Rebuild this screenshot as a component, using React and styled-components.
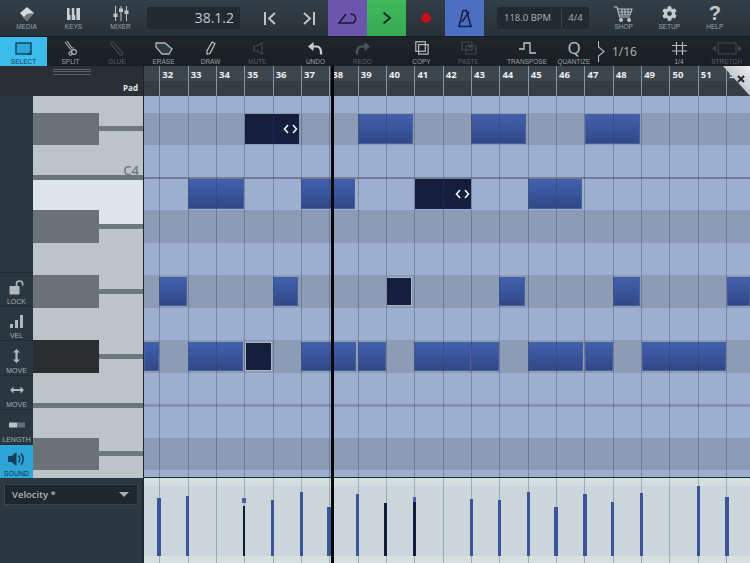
import React from 'react';
import styled, { createGlobalStyle } from 'styled-components';
import { FaCog } from 'react-icons/fa';

const GlobalStyle = createGlobalStyle`
  html, body {
    margin: 0;
    padding: 0;
    background: #2c3841;
    overflow: hidden;
  }
  * {
    box-sizing: border-box;
  }
`;

const BAR_START = 15.3;
const BAR_WIDTH = 28.35;

const bars = Array.from({ length: 21 }, (_, i) => 32 + i);

const rows = [
  { h: 16.5, key: 'white' },
  { h: 32.5, key: 'black', dark: true, notes: [[244.5, 299, 'sel', true], [358, 413], [471, 526], [585, 640]] },
  { h: 32.5, key: 'white', label: 'C4', line: '#6f7d98' },
  { h: 32.5, key: 'lit', notes: [[187.7, 244], [301.3, 355], [415, 471, 'sel', true], [528.3, 582]] },
  { h: 32.5, key: 'black', dark: true, lit: true },
  { h: 32.5, key: 'white' },
  { h: 32.5, key: 'black', dark: true, notes: [[159, 186.5], [272.7, 298.5], [386.3, 412.5, 'box'], [499.3, 525.5], [612.7, 640], [727, 750]] },
  { h: 32.5, key: 'white' },
  { h: 32.5, key: 'ebony', dark: true, notes: [[144, 158.5], [187.7, 243], [244.7, 272, 'box'], [301.3, 356.5], [358, 386], [414.3, 470.7], [471.3, 499], [528, 583.3], [584.7, 613], [641.7, 726.3]] },
  { h: 32.5, key: 'white', line: '#8392ae' },
  { h: 32.5, key: 'white' },
  { h: 32.5, key: 'black', dark: true },
  { h: 8, key: 'white' },
];

const velocities = [
  [159, 497.7], [187.7, 496.3], [244, 506, 'sel', 498], [272.7, 500], [301.7, 491.7], [329, 507],
  [357.7, 494], [385.7, 502.7, 'sel'], [414.7, 501, 'sel', 497], [471.3, 499], [499.3, 500],
  [528.3, 491.7], [556, 507], [585, 494], [612.7, 502], [641.7, 493], [698.3, 486], [727, 496.7],
];

const Screen = styled.div`
  position: relative;
  width: 750px;
  height: 563px;
  overflow: hidden;
  font-family: 'Liberation Sans', Arial, sans-serif;
`;

const TopBar = styled.div`
  display: flex;
  align-items: center;
  height: 37px;
  padding-left: 3px;
  background: linear-gradient(#333f48, #27313a);
  border-bottom: 1px solid #15191d;
`;

const NavItem = styled.div`
  display: flex;
  flex-direction: column;
  align-items: center;
  align-self: flex-start;
  flex: none;
  width: ${(p) => p.$w || 47}px;
  padding-top: 5px;
  color: #c4cbcf;
`;

const NavIcon = styled.div`
  display: flex;
  align-items: center;
  justify-content: center;
  height: 17px;
`;

const TinyLabel = styled.span`
  font-size: 6.5px;
  line-height: 9px;
  color: ${(p) => (p.$active ? '#0e3d5a' : p.$dim ? '#566067' : '#9aa3a9')};
  white-space: nowrap;
`;

const HelpMark = styled.span`
  font-size: 20px;
  font-weight: 700;
  line-height: 17px;
  color: #c4cbcf;
`;

const Position = styled.div`
  flex: none;
  width: 93px;
  height: 22px;
  margin-left: 3px;
  padding-right: 6px;
  border-radius: 2px;
  background: #212a31;
  color: #c2c7cb;
  font: 500 14px/22px 'Open Sans', sans-serif;
  text-align: right;
`;

const Skip = styled.div`
  display: flex;
  align-items: center;
  justify-content: center;
  flex: none;
  width: 39px;
  height: 36px;
  margin-left: ${(p) => p.$ml || 0}px;
`;

const Transport = styled.div`
  display: flex;
  align-items: center;
  justify-content: center;
  flex: none;
  width: 39px;
  height: 36px;
  background: ${(p) => p.$bg || 'transparent'};
`;

const RecordDot = styled.div`
  width: 10px;
  height: 10px;
  border-radius: 50%;
  background: #c3101c;
`;

const Tempo = styled.div`
  display: flex;
  align-items: center;
  flex: none;
  width: 92px;
  height: 22px;
  margin: 0 12px 0 13px;
  border-radius: 2px;
  background: #212a31;
  color: #a9b1b6;
  font: 500 9.5px/22px 'Open Sans', sans-serif;
`;

const TempoBpm = styled.div`
  width: 65px;
  padding-left: 7px;
  border-right: 1px solid #3a464e;
  line-height: 18px;
`;

const TempoSig = styled.div`
  flex: 1;
  text-align: center;
`;

const ToolBar = styled.div`
  display: flex;
  height: 29px;
  background: linear-gradient(#20262b, #191e23);
`;

const Tool = styled.div`
  display: flex;
  flex-direction: column;
  align-items: center;
  justify-content: flex-end;
  flex: none;
  width: ${(p) => p.$w || 47}px;
  margin-left: ${(p) => p.$ml || 0}px;
  background: ${(p) => (p.$active ? '#3cbcec' : 'transparent')};
`;

const ToolIcon = styled.div`
  display: flex;
  align-items: center;
  justify-content: center;
  height: 18px;
`;

const QuantizeQ = styled.span`
  font: 400 17px/18px 'Open Sans', sans-serif;
  color: #b9c1c6;
`;

const Fraction = styled.div`
  display: flex;
  align-items: center;
  flex: none;
  width: 58px;
  padding-left: 1px;
  color: #aeb6bb;
  font: 500 12px/28px 'Open Sans', sans-serif;
  gap: 7px;
`;

const RulerBar = styled.div`
  position: relative;
  display: flex;
  height: 30px;
`;

const TrackName = styled.div`
  position: relative;
  display: flex;
  align-items: flex-end;
  justify-content: flex-end;
  flex: none;
  width: 144px;
  padding: 0 5px 2px 0;
  background: #2a2f34;
  border-right: 1px solid #1d2125;
  color: #e6e9eb;
  font: 700 8px/12px 'Open Sans', sans-serif;
`;

const Grip = styled.div`
  position: absolute;
  top: 3px;
  left: 53px;
  width: 38px;
  height: 7px;
  background: repeating-linear-gradient(#59626a 0 1px, transparent 1px 2.5px);
`;

const Ruler = styled.div`
  display: flex;
  flex: 1;
  overflow: hidden;
  padding-left: ${BAR_START}px;
  background: linear-gradient(#3d454d 0 50%, #343c44 50%);
`;

const RulerCell = styled.div`
  flex: none;
  width: ${BAR_WIDTH}px;
  padding: 1px 0 0 2px;
  border-left: 1px solid #8c949b;
  color: #eceff1;
  font: 700 9.5px/15px 'Open Sans', sans-serif;
`;

const CloseCorner = styled.div`
  position: absolute;
  top: 0;
  right: 0;
  width: 27px;
  height: 30px;
  padding: 3px 5px 0 0;
  text-align: right;
  background: linear-gradient(45deg, #9ea4a8, #eef0f1);
  clip-path: polygon(0 0, 100% 0, 100% 100%);
`;

const Main = styled.div`
  display: grid;
  grid-template-columns: 144px 606px;
  grid-template-rows: 382px 85px;
`;

const KeyColumn = styled.div`
  display: flex;
  background: #2a3740;
`;

const SideTools = styled.div`
  display: flex;
  flex-direction: column;
  justify-content: flex-end;
  flex: none;
  width: 33px;
`;

const SideTool = styled.div`
  display: flex;
  flex-direction: column;
  align-items: center;
  justify-content: flex-end;
  height: 34.4px;
  border-top: 1px solid #222c34;
  background: ${(p) => (p.$active ? '#2ea5d6' : 'transparent')};
`;

const SideIcon = styled.div`
  display: flex;
  align-items: center;
  justify-content: center;
  height: 20px;
`;

const SideLabel = styled.span`
  font-size: 7px;
  line-height: 9px;
  color: ${(p) => (p.$active ? '#0c3653' : '#a0adb4')};
`;

const Keys = styled.div`
  flex: 1;
  border-right: 1px solid #20282e;
`;

const KeyRow = styled.div`
  position: relative;
  display: flex;
  height: ${(p) => p.$h}px;
  background: ${(p) => (p.$kind === 'lit' ? '#dde4ec' : '#bdc4c7')};
  ${(p) => p.$line && `
    &::after {
      content: '';
      position: absolute;
      left: 0;
      right: 0;
      bottom: -2.5px;
      height: 5px;
      background: #6c767a;
      z-index: 1;
    }
  `}
`;

const BlackKey = styled.div`
  flex: none;
  width: 66px;
  background: ${(p) => (p.$kind === 'ebony' ? '#2b2e30' : '#6a7276')};
`;

const KeyTail = styled.div`
  position: relative;
  flex: 1;
  background: ${(p) => (p.$lit ? 'linear-gradient(#dde4ec 0 50%, #bdc4c7 50%)' : 'transparent')};
  &::before {
    content: '';
    position: absolute;
    left: 0;
    right: 0;
    top: calc(50% - 2.5px);
    height: 5px;
    background: #6e777b;
  }
`;

const KeyName = styled.span`
  position: absolute;
  right: 4px;
  bottom: 1px;
  color: #72797d;
  font: 600 13px/14px 'Open Sans', sans-serif;
`;

const Roll = styled.div`
  position: relative;
  border-bottom: 1px solid #1d2a3b;
  overflow: hidden;
`;

const GridRow = styled.div`
  position: relative;
  height: ${(p) => p.$h}px;
  background: ${(p) => (p.$dark ? '#8c9bb6' : '#9dafd1')};
  ${(p) => p.$line && `
    &::after {
      content: '';
      position: absolute;
      left: 0;
      right: 0;
      bottom: -1.5px;
      height: 2.5px;
      background: ${p.$line};
      z-index: 1;
    }
  `}
`;

const noteBorder = {
  box: '1px solid rgba(222, 229, 236, 0.75)',
  sel: '0',
  plain: '1px solid #4a5f9c',
};

const Note = styled.div`
  position: absolute;
  top: 1.5px;
  height: 29.5px;
  display: flex;
  align-items: center;
  justify-content: flex-end;
  padding-right: 1px;
  background: ${(p) =>
    p.$type ? 'linear-gradient(#141c39, #162042)' : 'linear-gradient(#4160ad, #314887)'};
  border: ${(p) => noteBorder[p.$type || 'plain']};
`;

const BarLines = styled.div`
  position: absolute;
  inset: 0;
  display: flex;
  padding-left: ${BAR_START}px;
  pointer-events: none;
  z-index: 2;
`;

const BarLine = styled.div`
  flex: none;
  width: ${BAR_WIDTH}px;
  border-left: 1px solid ${(p) => p.$color};
`;

const Playhead = styled.div`
  position: absolute;
  top: 66px;
  bottom: 0;
  left: 331px;
  width: 3px;
  background: #050608;
  z-index: 4;
`;

const Controller = styled.div`
  padding: 6px 4px 0 4px;
  background: #2c3942;
  border-right: 2px solid #20292f;
`;

const Select = styled.div`
  display: flex;
  align-items: center;
  justify-content: space-between;
  height: 21px;
  padding: 0 8px 0 7px;
  background: #1e272e;
  border: 1px solid #37444c;
  color: #aeb8bd;
  font: 600 9.5px/19px 'Open Sans', sans-serif;
`;

const SelectArrow = styled.div`
  width: 0;
  height: 0;
  border-left: 5px solid transparent;
  border-right: 5px solid transparent;
  border-top: 5px solid #a6afb4;
`;

const VelocityLane = styled.div`
  position: relative;
  overflow: hidden;
  background: linear-gradient(#d6dfe0 0 8px, #cad6dc 8px 78px, #d6dfe0 78px);
`;

const VelocityBar = styled.div`
  position: absolute;
  bottom: 7.5px;
  width: ${(p) => (p.$sel ? 2.5 : 3.5)}px;
  background: ${(p) => (p.$sel ? '#121b38' : '#3d5596')};
  z-index: 3;
`;

const VelocityCap = styled.div`
  position: absolute;
  width: 3.5px;
  background: #4a62a2;
  z-index: 3;
`;

const Dimmed = ({ children, w = 18, h = 16, stroke = '#3f4950', box = '0 0 18 16' }) => (
  <svg width={w} height={h} viewBox={box} fill="none" stroke={stroke} strokeWidth="1.2">
    {children}
  </svg>
);

const Handles = () => (
  <svg width="15" height="10" viewBox="0 0 15 10" fill="none" stroke="#f2f4f8" strokeWidth="1.6">
    <path d="M5 1 1.5 5 5 9M10 1l3.5 4L10 9" />
  </svg>
);

function App() {
  return (
    <Screen>
      <GlobalStyle />
      <TopBar>
        <NavItem>
          <NavIcon>
            <svg width="16" height="16" viewBox="0 0 16 16">
              <path d="M8 1 15 7 8 15 1 7Z" fill="#d3d9dc" />
              <path d="M8 15 15 7 8 8 4 12Z" fill="#69747b" />
            </svg>
          </NavIcon>
          <TinyLabel>MEDIA</TinyLabel>
        </NavItem>
        <NavItem>
          <NavIcon>
            <svg width="13" height="14" viewBox="0 0 13 14">
              <path d="M0 1h3.6v12H0zM4.7 1h3.6v12H4.7zM9.4 1H13v12H9.4z" fill="#c9cfd3" />
              <path d="M2.6 1h1.6v7H2.6zM7.3 1h1.6v7H7.3z" fill="#2a343c" />
            </svg>
          </NavIcon>
          <TinyLabel>KEYS</TinyLabel>
        </NavItem>
        <NavItem>
          <NavIcon>
            <svg width="16" height="15" viewBox="0 0 16 15" stroke="#bcc4c9" strokeWidth="1" fill="#bcc4c9">
              <path d="M2.5 0v15M8 0v15M13.5 0v15" />
              <rect x="1" y="8" width="3" height="2.5" />
              <rect x="6.5" y="3" width="3" height="2.5" />
              <rect x="12" y="5" width="3" height="2.5" />
            </svg>
          </NavIcon>
          <TinyLabel>MIXER</TinyLabel>
        </NavItem>
        <Position>38.1.2</Position>
        <Skip $ml={10}>
          <svg width="14" height="13" viewBox="0 0 14 13" fill="none" stroke="#bcc4c9" strokeWidth="2">
            <path d="M2 0v13M12 1 6 6.5 12 12" />
          </svg>
        </Skip>
        <Skip>
          <svg width="14" height="13" viewBox="0 0 14 13" fill="none" stroke="#bcc4c9" strokeWidth="2">
            <path d="M12 0v13M2 1l6 5.5L2 12" />
          </svg>
        </Skip>
        <Transport $bg="#6b55ae">
          <svg width="19" height="11" viewBox="0 0 19 11" fill="none" stroke="#161c2a" strokeWidth="1.5">
            <path d="M8 1 1 10H14C17 10 18 7 17.5 4.5 17 2 15.5 1 12.5 1" />
          </svg>
        </Transport>
        <Transport $bg="linear-gradient(#3fb95c, #37ab52)">
          <svg width="10" height="14" viewBox="0 0 10 14" fill="none" stroke="#12301e" strokeWidth="2">
            <path d="M1.5 1.5 8 7l-6.5 5.5" />
          </svg>
        </Transport>
        <Transport>
          <RecordDot />
        </Transport>
        <Transport $bg="#4c6fc4">
          <svg width="14" height="19" viewBox="0 0 14 19" fill="none" stroke="#141f45" strokeWidth="1.6">
            <path d="M5 1.5h3.5L13 17.5H1Z" />
            <path d="M4 13 11 3" />
          </svg>
        </Transport>
        <Tempo>
          <TempoBpm>118.0 BPM</TempoBpm>
          <TempoSig>4/4</TempoSig>
        </Tempo>
        <NavItem $w={45.5}>
          <NavIcon>
            <svg width="19" height="16" viewBox="0 0 19 16" fill="none" stroke="#bcc4c9" strokeWidth="1.1">
              <path d="M0 1h3l2.5 10H16" />
              <path d="M4 3h14l-2 6H5.5M8 3v6M11 3v6M14 3v6M4.7 6H17" />
              <circle cx="7" cy="14" r="1.4" fill="#bcc4c9" />
              <circle cx="15" cy="14" r="1.4" fill="#bcc4c9" />
            </svg>
          </NavIcon>
          <TinyLabel>SHOP</TinyLabel>
        </NavItem>
        <NavItem $w={45.5}>
          <NavIcon>
            <FaCog size={15} color="#c4cbcf" />
          </NavIcon>
          <TinyLabel>SETUP</TinyLabel>
        </NavItem>
        <NavItem $w={45.5}>
          <NavIcon>
            <HelpMark>?</HelpMark>
          </NavIcon>
          <TinyLabel>HELP</TinyLabel>
        </NavItem>
      </TopBar>

      <ToolBar>
        <Tool $active>
          <ToolIcon>
            <svg width="17" height="13" viewBox="0 0 17 13">
              <rect x="1" y="1" width="15" height="11" fill="#2da5d6" stroke="#12405e" strokeWidth="1.4" />
              <path d="M16 9v4h-4Z" fill="#12405e" />
            </svg>
          </ToolIcon>
          <TinyLabel $active>SELECT</TinyLabel>
        </Tool>
        <Tool>
          <ToolIcon>
            <svg width="14" height="15" viewBox="0 0 14 15" fill="none" stroke="#aab3b8" strokeWidth="1.1">
              <path d="M1 1 8 10M3 0l5 7 2 0" />
              <circle cx="10" cy="11" r="2.4" />
              <circle cx="6.5" cy="12.5" r="1.6" />
            </svg>
          </ToolIcon>
          <TinyLabel>SPLIT</TinyLabel>
        </Tool>
        <Tool $w={46}>
          <ToolIcon>
            <Dimmed w={14} h={15} box="0 0 14 15">
              <path d="M1 1 3 1 13 12 12 14 10 14 1 3Z" />
            </Dimmed>
          </ToolIcon>
          <TinyLabel $dim>GLUE</TinyLabel>
        </Tool>
        <Tool>
          <ToolIcon>
            <svg width="18" height="13" viewBox="0 0 18 13" fill="#2f3942" stroke="#aeb7bc" strokeWidth="1.3">
              <path d="M1 1h9l7 6-3 5H7L1 5Z" />
            </svg>
          </ToolIcon>
          <TinyLabel>ERASE</TinyLabel>
        </Tool>
        <Tool>
          <ToolIcon>
            <svg width="10" height="14" viewBox="0 0 10 14" fill="none" stroke="#bcc4c9" strokeWidth="1.2">
              <path d="M6 1l3 1.5L4 12.5 1 13l0-3Z" />
            </svg>
          </ToolIcon>
          <TinyLabel>DRAW</TinyLabel>
        </Tool>
        <Tool>
          <ToolIcon>
            <Dimmed w={10} h={13} box="0 0 10 13">
              <path d="M9 1v11L4 9H1V4h3Z" />
            </Dimmed>
          </ToolIcon>
          <TinyLabel $dim>MUTE</TinyLabel>
        </Tool>
        <Tool $ml={11}>
          <ToolIcon>
            <svg width="15" height="13" viewBox="0 0 15 13" fill="none">
              <path d="M4 4.5h4.5C11.5 4.5 13.5 7 13 12.5" stroke="#c8cfd3" strokeWidth="2.2" />
              <path d="M5.5 0v9L0 4.5Z" fill="#c8cfd3" />
            </svg>
          </ToolIcon>
          <TinyLabel>UNDO</TinyLabel>
        </Tool>
        <Tool>
          <ToolIcon>
            <svg width="15" height="13" viewBox="0 0 15 13" fill="none">
              <path d="M11 4.5H6.5C3.5 4.5 1.5 7 2 12.5" stroke="#4c565d" strokeWidth="2.2" />
              <path d="M9.5 0v9L15 4.5Z" fill="#4c565d" />
            </svg>
          </ToolIcon>
          <TinyLabel $dim>REDO</TinyLabel>
        </Tool>
        <Tool $ml={12}>
          <ToolIcon>
            <svg width="14" height="14" viewBox="0 0 14 14" fill="none" stroke="#b4bcc1" strokeWidth="1.2">
              <rect x="0.8" y="0.8" width="9.5" height="9.5" />
              <rect x="3.6" y="3.6" width="9.5" height="9.5" />
            </svg>
          </ToolIcon>
          <TinyLabel>COPY</TinyLabel>
        </Tool>
        <Tool>
          <ToolIcon>
            <Dimmed w={16} h={14} box="0 0 16 14">
              <path d="M1 1h10v8H1zM5 5h10v8H5zM7 3l3 3M10 3.5V6H7.5" />
            </Dimmed>
          </ToolIcon>
          <TinyLabel $dim>PASTE</TinyLabel>
        </Tool>
        <Tool $ml={11} $w={48}>
          <ToolIcon>
            <svg width="17" height="12" viewBox="0 0 17 12" fill="none" stroke="#c0c8cc" strokeWidth="1.3">
              <path d="M0 7h5V1h6v10h6" />
            </svg>
          </ToolIcon>
          <TinyLabel>TRANSPOSE</TinyLabel>
        </Tool>
        <Tool $w={46}>
          <ToolIcon>
            <QuantizeQ>Q</QuantizeQ>
          </ToolIcon>
          <TinyLabel>QUANTIZE</TinyLabel>
        </Tool>
        <Fraction>
          <svg width="7" height="21" viewBox="0 0 7 21" fill="none" stroke="#b5bdc2" strokeWidth="1.1">
            <path d="M0.5 0v6L6 10.5 0.5 15v6" />
          </svg>
          1/16
        </Fraction>
        <Tool $w={48}>
          <ToolIcon>
            <svg width="15" height="13" viewBox="0 0 15 13" fill="none" stroke="#b4bcc1" strokeWidth="1.2">
              <path d="M4.5 0v13M10.5 0v13M0 3.5h15M0 9h15" />
            </svg>
          </ToolIcon>
          <TinyLabel>1/4</TinyLabel>
        </Tool>
        <Tool>
          <ToolIcon>
            <svg width="30" height="13" viewBox="0 0 30 13" fill="none" stroke="#3f4950" strokeWidth="1">
              <rect x="6" y="1" width="18" height="11" />
              <path d="M3.5 4v5L1 6.5ZM26.5 4v5L29 6.5Z" fill="#3f4950" />
            </svg>
          </ToolIcon>
          <TinyLabel $dim>STRETCH</TinyLabel>
        </Tool>
      </ToolBar>

      <RulerBar>
        <TrackName>
          <Grip />
          Pad
        </TrackName>
        <Ruler>
          {bars.map((bar) => (
            <RulerCell key={bar}>{bar}</RulerCell>
          ))}
        </Ruler>
        <CloseCorner>
          <svg width="8" height="8" viewBox="0 0 8 8" stroke="#24282c" strokeWidth="2">
            <path d="M1 1l6 6M7 1 1 7" />
          </svg>
        </CloseCorner>
      </RulerBar>

      <Main>
        <KeyColumn>
          <SideTools>
            <SideTool>
              <SideIcon>
                <svg width="16" height="15" viewBox="0 0 16 15" fill="none">
                  <rect x="0.5" y="6" width="10" height="8.5" rx="1" fill="#aeb8bd" />
                  <path d="M7.5 6V3.5C7.5 1.5 9 1 10.7 1s3 .8 3 2.8V5.5" stroke="#aeb8bd" strokeWidth="1.6" />
                </svg>
              </SideIcon>
              <SideLabel>LOCK</SideLabel>
            </SideTool>
            <SideTool>
              <SideIcon>
                <svg width="13" height="14" viewBox="0 0 13 14" fill="#aeb8bd">
                  <path d="M0 10h3v4H0zM5 6h3v8H5zM10 1h3v13h-3z" />
                </svg>
              </SideIcon>
              <SideLabel>VEL</SideLabel>
            </SideTool>
            <SideTool>
              <SideIcon>
                <svg width="7" height="14" viewBox="0 0 7 14" fill="#aeb8bd">
                  <path d="M3.5 0 7 3.5H4.6v7H7L3.5 14 0 10.5h2.4v-7H0Z" />
                </svg>
              </SideIcon>
              <SideLabel>MOVE</SideLabel>
            </SideTool>
            <SideTool>
              <SideIcon>
                <svg width="14" height="8" viewBox="0 0 14 8" fill="#aeb8bd">
                  <path d="M0 4 3.5 0.5v2.4h7V.5L14 4l-3.5 3.5V5.1h-7v2.4Z" />
                </svg>
              </SideIcon>
              <SideLabel>MOVE</SideLabel>
            </SideTool>
            <SideTool>
              <SideIcon>
                <svg width="16" height="6" viewBox="0 0 16 6">
                  <rect x="0" y="0.5" width="8" height="5" fill="#b6c0c5" />
                  <rect x="8" y="0.5" width="8" height="5" fill="#5f707b" />
                </svg>
              </SideIcon>
              <SideLabel>LENGTH</SideLabel>
            </SideTool>
            <SideTool $active>
              <SideIcon>
                <svg width="17" height="14" viewBox="0 0 17 14" fill="none">
                  <path d="M0 4h3.5L8.5 0v14L3.5 10H0Z" fill="#123f5d" />
                  <path d="M10.5 3.5c1.8 2 1.8 5 0 7M13 1.5c3 3 3 8 0 11" stroke="#123f5d" strokeWidth="1.6" />
                </svg>
              </SideIcon>
              <SideLabel $active>SOUND</SideLabel>
            </SideTool>
          </SideTools>
          <Keys>
            {rows.map((row, i) => (
              <KeyRow key={i} $h={row.h} $kind={row.key} $line={row.line}>
                {row.dark && <BlackKey $kind={row.key} />}
                {row.dark && <KeyTail $lit={row.lit} />}
                {row.label && <KeyName>{row.label}</KeyName>}
              </KeyRow>
            ))}
          </Keys>
        </KeyColumn>

        <Roll>
          {rows.map((row, i) => (
            <GridRow key={i} $h={row.h} $dark={row.dark} $line={row.line}>
              {(row.notes || []).map(([from, to, type, handles]) => (
                <Note key={from} $type={type} style={{ left: from - 144, width: to - from }}>
                  {handles && <Handles />}
                </Note>
              ))}
            </GridRow>
          ))}
          <BarLines>
            {bars.map((bar) => (
              <BarLine key={bar} $color="rgba(48, 62, 98, 0.34)" />
            ))}
          </BarLines>
        </Roll>

        <Controller>
          <Select>
            Velocity *
            <SelectArrow />
          </Select>
        </Controller>

        <VelocityLane>
          <BarLines>
            {bars.map((bar) => (
              <BarLine key={bar} $color="rgba(90, 105, 115, 0.42)" />
            ))}
          </BarLines>
          {velocities.map(([x, top, type, cap]) => (
            <React.Fragment key={x}>
              <VelocityBar
                $sel={type === 'sel'}
                style={{ left: x - 144 - (type ? 1.25 : 1.75), height: 555.6 - top }}
              />
              {cap && <VelocityCap style={{ left: x - 145.75, top: cap - 478, height: 4.5 }} />}
            </React.Fragment>
          ))}
        </VelocityLane>
      </Main>
      <Playhead />
    </Screen>
  );
}

export default App;
